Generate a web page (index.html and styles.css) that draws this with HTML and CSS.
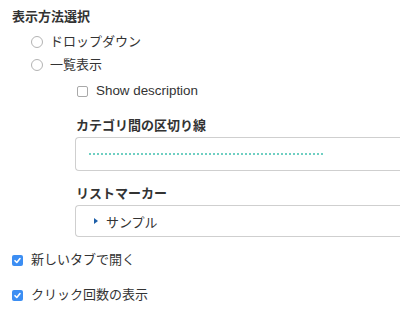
FILE: index.html
```html
<!DOCTYPE html>
<html lang="ja">
<head>
<meta charset="utf-8">
<link rel="stylesheet" href="styles.css">
</head>
<body>
<div class="page">
  <div class="title">表示方法選択</div>
  <div class="options">
    <label class="row radio-row"><span class="radio"></span><span>ドロップダウン</span></label>
    <label class="row radio-row"><span class="radio"></span><span>一覧表示</span></label>
  </div>
  <div class="sub">
    <label class="row check-row"><span class="check"></span><span class="latin">Show description</span></label>
    <div class="field">
      <div class="field-label">カテゴリ間の区切り線</div>
      <div class="box box-sep"><span class="dots"></span></div>
    </div>
    <div class="field">
      <div class="field-label">リストマーカー</div>
      <div class="box box-marker"><span class="tri"></span><span>サンプル</span></div>
    </div>
  </div>
  <div class="bottom">
    <label class="row"><span class="check checked"><svg viewBox="0 0 11 11" width="11" height="11"><path d="M3 5.7 L4.8 7.5 L8 3.6" fill="none" stroke="#fff" stroke-width="1.6" stroke-linecap="round" stroke-linejoin="round"/></svg></span><span>新しいタブで開く</span></label>
    <label class="row"><span class="check checked"><svg viewBox="0 0 11 11" width="11" height="11"><path d="M3 5.7 L4.8 7.5 L8 3.6" fill="none" stroke="#fff" stroke-width="1.6" stroke-linecap="round" stroke-linejoin="round"/></svg></span><span>クリック回数の表示</span></label>
  </div>
</div>
</body>
</html>
```

FILE: styles.css
```css
html, body {
  margin: 0;
  padding: 0;
  background: #fff;
}
body {
  width: 400px;
  height: 320px;
  overflow: hidden;
  font-family: "Liberation Sans", "Noto Sans CJK JP", sans-serif;
  font-size: 13px;
  color: #333;
}
.page {
  padding-top: 9px;
}
.title {
  margin-left: 12px;
  height: 16px;
  line-height: 16px;
  font-weight: bold;
  font-size: 13px;
}
.row {
  display: flex;
  align-items: center;
  height: 16px;
  line-height: 16px;
}
.options {
  padding-left: 31px;
  margin-top: 9px;
  display: flex;
  flex-direction: column;
  gap: 7px;
}
.radio {
  width: 12px;
  height: 12px;
  box-sizing: border-box;
  border: 1px solid #b3b3b3;
  border-radius: 50%;
  background: #fff;
  margin-right: 7px;
  flex: none;
}
.check {
  width: 11px;
  height: 11px;
  box-sizing: border-box;
  border: 1px solid #a9a9a9;
  border-radius: 2px;
  background: #fff;
  margin-right: 8px;
  flex: none;
  display: flex;
}
.check.checked {
  border: none;
  background: #3c8ef3;
}
.check svg {
  display: block;
}
.sub {
  padding-left: 75px;
  margin-top: 10px;
}
.check-row {
  padding-left: 2px;
}
.latin {
  font-family: "Liberation Sans", sans-serif;
  font-size: 13.4px;
}
.field {
  margin-top: 19px;
}
.field + .field {
  margin-top: 15px;
}
.field-label {
  height: 16px;
  line-height: 16px;
  font-weight: bold;
  margin-left: 1px;
}
.box {
  margin-top: 3px;
  box-sizing: border-box;
  border: 1px solid #cfcfcf;
  border-right: none;
  border-radius: 4px 0 0 4px;
  display: flex;
  align-items: center;
}
.box-sep {
  height: 34px;
  padding-left: 12px;
}
.dots {
  display: block;
  width: 236px;
  height: 2px;
  background-image: radial-gradient(circle, #6fcfc2 0.9px, transparent 1.1px);
  background-size: 4px 2px;
  background-repeat: repeat-x;
}
.box-marker {
  height: 32px;
  padding-left: 18px;
}
.tri {
  width: 0;
  height: 0;
  border-top: 3px solid transparent;
  border-bottom: 3px solid transparent;
  border-left: 4px solid #1d5fa8;
  margin-right: 8px;
}
.bottom {
  padding-left: 12px;
  margin-top: 15px;
  display: flex;
  flex-direction: column;
  gap: 19px;
}
```
